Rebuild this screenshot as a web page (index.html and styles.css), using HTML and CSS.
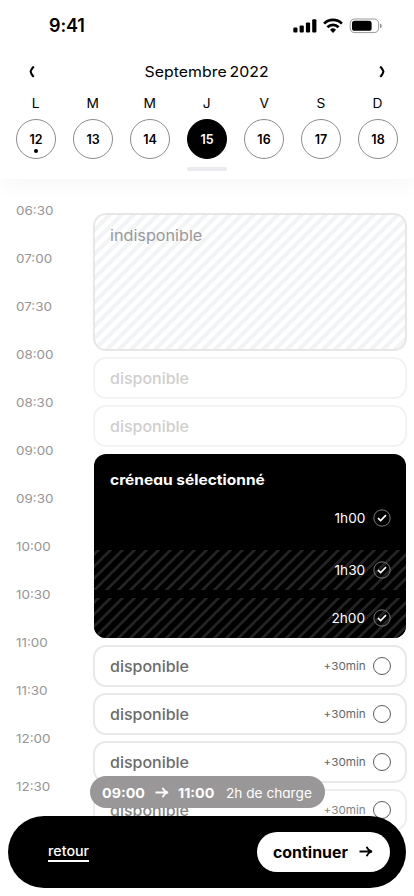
FILE: index.html
```html
<!DOCTYPE html>
<html lang="fr">
<head>
<meta charset="utf-8">
<meta name="viewport" content="width=device-width, initial-scale=1">
<title>Réservation</title>
<link rel="stylesheet" href="styles.css">
</head>
<body>
<div class="screen">
  <header class="header">
    <div class="status">
      <span class="clock">9:41</span>
      <svg class="status-icons" width="90" height="16" viewBox="0 0 90 16">
        <rect x="0.3" y="9.6" width="4.2" height="5" rx="1.1"/>
        <rect x="6.6" y="7.4" width="4.2" height="7.2" rx="1.1"/>
        <rect x="12.9" y="4.4" width="4.2" height="10.2" rx="1.1"/>
        <rect x="19.2" y="1.2" width="4.2" height="13.4" rx="1.1"/>
        <g fill="none" stroke="#000" stroke-width="2.7">
          <path d="M31.1 5.6a12.6 12.6 0 0 1 17.8 0"/>
          <path d="M34.4 9.2a8 8 0 0 1 11.2 0"/>
        </g>
        <path d="M40 14.9l-3-3.1a4.3 4.3 0 0 1 6 0z"/>
        <rect x="57.2" y="1" width="28.4" height="13.6" rx="4.3" fill="none" stroke="#000" stroke-opacity=".4"/>
        <rect x="59" y="2.8" width="19.6" height="10" rx="2.6"/>
        <path d="M87 5.6v4.6a2.4 2.4 0 0 0 0-4.6z" fill-opacity=".45"/>
      </svg>
    </div>
    <div class="month">
      <svg width="8" height="12" viewBox="0 0 8 12"><path d="M5.9 .6L4.9 1.4Q3 4 2.6 5.5Q3 7.5 4.9 10L5.9 10.8"/></svg>
      <span class="month-name">Septembre 2022</span>
      <svg width="8" height="12" viewBox="0 0 8 12"><path d="M2.1 .6L3.1 1.4Q5 4 5.4 5.5Q5 7.5 3.1 10L2.1 10.8"/></svg>
    </div>
    <div class="week">
      <div class="day"><span class="letter">L</span><span class="num today">12</span></div>
      <div class="day"><span class="letter">M</span><span class="num">13</span></div>
      <div class="day"><span class="letter">M</span><span class="num">14</span></div>
      <div class="day"><span class="letter">J</span><span class="num active">15</span></div>
      <div class="day"><span class="letter">V</span><span class="num">16</span></div>
      <div class="day"><span class="letter">S</span><span class="num">17</span></div>
      <div class="day"><span class="letter">D</span><span class="num">18</span></div>
    </div>
    <div class="handle"></div>
  </header>

  <main class="agenda">
    <div class="hours">
      <span>06:30</span><span>07:00</span><span>07:30</span><span>08:00</span><span>08:30</span><span>09:00</span><span>09:30</span><span>10:00</span><span>10:30</span><span>11:00</span><span>11:30</span><span>12:00</span><span>12:30</span>
    </div>
    <div class="slots">
      <div class="busy"><span>indisponible</span></div>
      <div class="slot past"><span class="label">disponible</span></div>
      <div class="slot past"><span class="label">disponible</span></div>
      <div class="selected">
        <div class="title">créneau sélectionné</div>
        <div class="step first"><span>1h00</span><svg class="ring" viewBox="0 0 18 18"><circle cx="9" cy="9" r="8.2"/><path d="M5 9.1l2.6 2.4L13 6.2"/></svg></div>
        <div class="step hatched"><span>1h30</span><svg class="ring" viewBox="0 0 18 18"><circle cx="9" cy="9" r="8.2"/><path d="M5 9.1l2.6 2.4L13 6.2"/></svg></div>
        <div class="step hatched"><span>2h00</span><svg class="ring" viewBox="0 0 18 18"><circle cx="9" cy="9" r="8.2"/><path d="M5 9.1l2.6 2.4L13 6.2"/></svg></div>
      </div>
      <div class="slot"><span class="label">disponible</span><span class="more">+30min</span><i class="radio"></i></div>
      <div class="slot"><span class="label">disponible</span><span class="more">+30min</span><i class="radio"></i></div>
      <div class="slot"><span class="label">disponible</span><span class="more">+30min</span><i class="radio"></i></div>
      <div class="slot fading"><span class="label">disponible</span><span class="more">+30min</span><i class="radio"></i></div>
    </div>
  </main>

  <div class="summary">
    <b class="from">09:00</b>
    <svg width="14" height="12" viewBox="0 0 14 12"><path d="M.5 5.5H12.5M7.6 .7Q9 4.5 13 5.5Q9 6.5 7.6 10.3"/></svg>
    <b class="to">11:00</b>
    <span>2h de charge</span>
  </div>

  <footer class="bar">
    <a class="back"><span>retour</span></a>
    <div class="next"><span>continuer</span><svg width="14" height="12" viewBox="0 0 14 12"><path d="M.5 5.5H12.5M7.6 .7Q9 4.5 13 5.5Q9 6.5 7.6 10.3"/></svg></div>
  </footer>
</div>
</body>
</html>
```
FILE: styles.css
```css
* { box-sizing: border-box; }
body {
  margin: 0;
  background: #fff;
  color: #000;
  font-family: Inter, "Liberation Sans", sans-serif;
  font-feature-settings: "cv11";
}
svg { display: block; flex: none; }
.screen { position: relative; width: 414px; height: 896px; overflow: hidden; }

.header {
  position: relative;
  height: 179px;
  background: #fff;
  box-shadow: 0 12px 20px -4px rgba(0, 0, 0, .035);
}
.status {
  display: flex;
  justify-content: space-between;
  align-items: center;
  height: 51px;
  padding: 0 31px 0 49px;
}
.clock { font-size: 18px; font-weight: 600; letter-spacing: -.1px; }
.month {
  display: flex;
  justify-content: space-between;
  align-items: center;
  height: 41px;
  padding: 0 28px;
}
.month svg path { fill: none; stroke: #000; stroke-width: 2.1; }
.month-name { font-size: 14.5px; word-spacing: -1.5px; transform: scaleX(1.095); }
.week { display: flex; justify-content: space-between; padding: 3px 16px 0; }
.day { display: flex; flex-direction: column; width: 40px; align-items: center; }
.letter { font-size: 12.5px; line-height: 18px; margin-bottom: 6px; transform: scaleX(1.1); }
.num {
  position: relative;
  width: 40px;
  height: 40px;
  border: 1px solid #8c8c8c;
  border-radius: 50%;
  font-size: 12.5px;
  font-weight: 600;
  line-height: 39px;
  text-align: center;
}
.num.active { background: #000; border-color: #000; color: #fff; }
.today::after {
  content: "";
  position: absolute;
  left: 17px;
  bottom: 5px;
  width: 4px;
  height: 4px;
  border-radius: 50%;
  background: #000;
}
.handle { width: 40px; height: 4px; margin: 8px auto 0; border-radius: 2px; background: #ebebef; }

.agenda { display: flex; }
.hours { display: flex; flex-direction: column; align-items: flex-start; width: 93px; padding: 20px 0 0 16px; }
.hours span { height: 48px; font-size: 12.3px; line-height: 24px; color: #969696; transform: scaleX(1.09); transform-origin: 0 0; }
.slots { display: flex; flex-direction: column; gap: 6px; width: 314px; padding-top: 34px; }
.busy {
  height: 138px;
  padding: 9px 15px;
  border: 2px solid #e7e7e8;
  border-radius: 13px;
  background: repeating-linear-gradient(135deg, #f2f4f6 0 3.6px, #fff 3.6px 8.485px);
  font-size: 15px;
  line-height: 24px;
  color: #999;
}
.busy span { display: inline-block; transform: scaleX(1.08); transform-origin: 0 0; }
.slot {
  display: flex;
  align-items: center;
  height: 42px;
  flex: none;
  padding: 0 14px 0 15px;
  border: 2px solid #e8e8e8;
  border-radius: 13px;
  background: #fff;
}
.label { padding-top: 1px; font-size: 15px; font-weight: 500; color: #6b6b6b; transform: scaleX(1.065); transform-origin: 0 0; }
.past { border-color: #f3f3f3; }
.past .label { color: #d0cece; }
.more { font-size: 11px; color: #666; margin: 0 7px 0 auto; transform: scaleX(1.06); transform-origin: 100% 0; }
.radio { width: 18px; height: 18px; border: 1px solid #5c5c5c; border-radius: 50%; }
.fading { border-color: #eee; }
.fading .label, .fading .more { color: #858585; }

.selected {
  height: 184px;
  margin: 1px;
  border-radius: 12px;
  overflow: hidden;
  background: #000;
  color: #fff;
}
.title { padding: 14px 0 0; margin-left: 16px; font-size: 14.5px; font-weight: 700; line-height: 24px; transform: scaleX(1.07); transform-origin: 0 0; }
.step {
  display: flex;
  align-items: center;
  justify-content: flex-end;
  gap: 8px;
  height: 40px;
  padding-right: 15px;
  margin-bottom: 8px;
  font-size: 13px;
}
.step span { transform: scaleX(1.05); transform-origin: 100% 0; }
.step.first { height: 52px; margin-bottom: 6px; }
.hatched { background: repeating-linear-gradient(135deg, #000 0 1.6px, #222 1.6px 4.6px, #000 4.6px 8.485px); }
.ring { width: 18px; height: 18px; fill: none; }
.ring circle { stroke: #777; stroke-width: 1; }
.ring path { stroke: #fff; stroke-width: 1.7; }

.summary {
  position: absolute;
  left: 90px;
  top: 776px;
  display: flex;
  align-items: center;
  width: 235px;
  height: 32px;
  padding: 1px 12px 0;
  border-radius: 16px;
  background: #999798;
  color: #fff;
  font-size: 13px;
  white-space: nowrap;
}
.summary b { width: 42px; font-size: 13.5px; font-weight: 700; transform: scaleX(1.06); transform-origin: 0 0; }
.summary svg { margin: 0 9px 0 11px; }
.summary span { margin-left: 6px; transform: scaleX(1.05); transform-origin: 0 0; }
.summary path, .next path { fill: none; stroke: currentColor; stroke-width: 1.8; }

.bar {
  position: absolute;
  left: 8px;
  top: 816px;
  display: flex;
  justify-content: space-between;
  align-items: center;
  width: 398px;
  height: 72px;
  padding: 0 16px 0 40px;
  border-radius: 36px;
  background: #000;
}
.back { width: 41px; color: #fff; font-size: 13px; font-weight: 500; line-height: 18px; border-bottom: 2px solid #fff; }
.back span { display: inline-block; transform: scaleX(1.1); transform-origin: 0 0; }
.next span { transform: scaleX(1.06); transform-origin: 0 0; }
.next {
  display: flex;
  align-items: center;
  justify-content: space-between;
  width: 133px;
  height: 40px;
  padding: 0 17px 0 16px;
  border-radius: 20px;
  background: #fff;
  font-size: 15px;
  font-weight: 700;
}
```
